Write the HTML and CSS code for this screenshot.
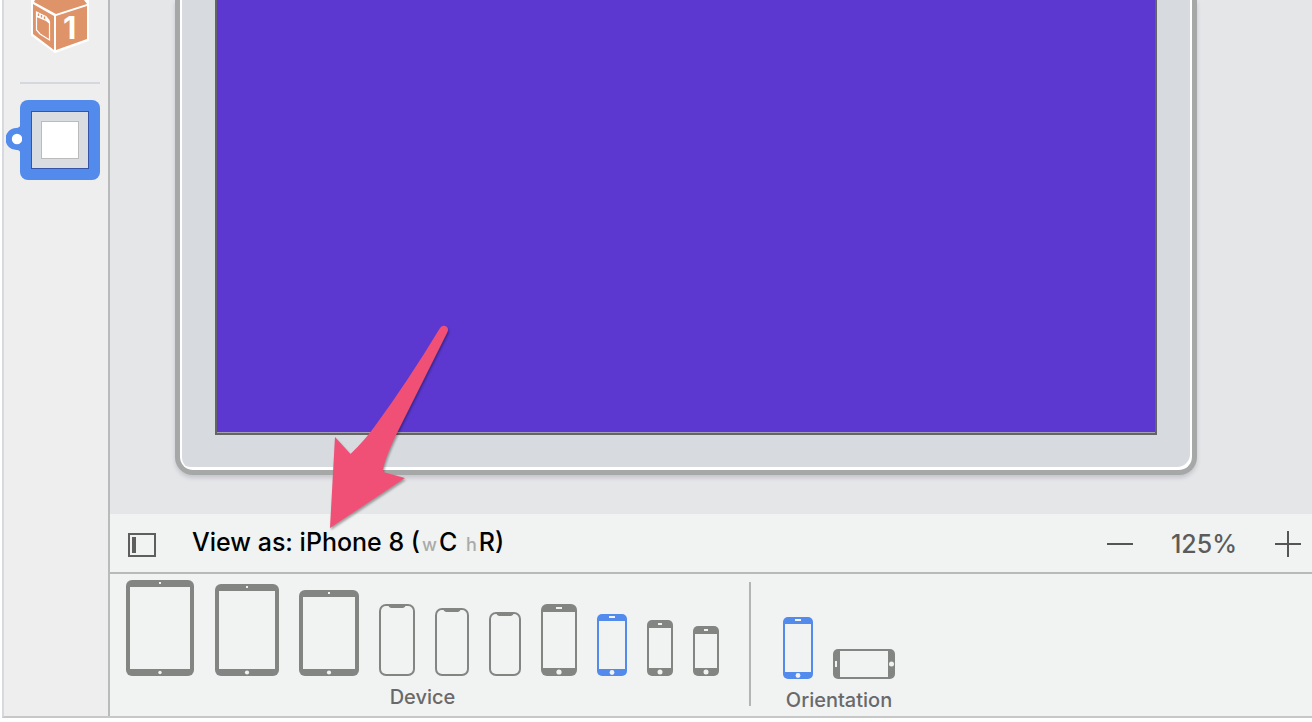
FILE: index.html
```html
<!DOCTYPE html>
<html lang="en">
<head>
<meta charset="utf-8">
<meta name="viewport" content="width=device-width, initial-scale=1">
<title>Interface Builder</title>
<link rel="stylesheet" href="styles.css">
</head>
<body>
<div class="window">
  <nav class="dock" aria-label="Document outline">
    <button class="dock-cube" aria-label="Placeholder object">
      <svg width="60" height="54" viewBox="30 0 60 54">
        <path d="M32 0 60 -12 88 0 88 40 55 52 32 35Z" fill="#fff" stroke="#fff" stroke-width="2" stroke-linejoin="round"/>
        <path d="M35 0 84 0 87 4 56 14 34 2Z" fill="#df9368"/>
        <path d="M33 4 54 16 54 50 33 34Z" fill="#df9368"/>
        <path d="M56 16 87 6 87 39 56 50Z" fill="#df9368"/>
        <path d="M36.500 12 46 17 49.500 22 49.500 40 40 34 36.500 30Z" fill="none" stroke="#fff" stroke-width="1.200"/>
        <path d="M36.500 12 46 16 49.500 20 49.500 24 46 21 36.500 17Z" fill="#fff"/>
        <path d="M38.500 13.500v2.500M41.500 15v2.500M44.500 16.500v2.500" stroke="#df9368" stroke-width="1.400"/>
        <text class="cube-digit" x="63" y="39">1</text>
      </svg>
    </button>
    <hr class="dock-rule">
    <button class="dock-view" aria-label="View">
      <span class="view-frame"><span class="view-sheet"></span></span>
      <svg class="view-link" width="24" height="30" viewBox="0 0 24 30">
        <path d="M15 0Q14 4 10 4A11 11 0 0 0 11 26Q14 26 15 30H24V0Z" fill="#528bec"/>
        <circle cx="11" cy="15" r="5.200" fill="#fff"/>
      </svg>
    </button>
  </nav>
  <main class="editor">
    <section class="canvas" aria-label="Canvas">
      <div class="phone"><div class="screen"></div></div>
    </section>
    <div class="viewbar">
      <button class="outline-toggle" aria-label="Toggle outline">
        <svg width="28" height="24"><rect x="1" y="1" width="26" height="22" fill="none" stroke="#5e5e5e" stroke-width="2"/><rect x="4" y="4" width="4" height="16" fill="#5e5e5e"/></svg>
      </button>
      <button class="view-as">View as: iPhone 8 (<small>w</small>C <small>h</small>R)</button>
      <div class="zoom">
        <button aria-label="Zoom out"><svg width="26" height="26"><path d="M0 13H26" stroke="#555" stroke-width="2"/></svg></button>
        <button class="percent">125%</button>
        <button aria-label="Zoom in"><svg width="26" height="26"><path d="M0 13H26M13 0V26" stroke="#555" stroke-width="2"/></svg></button>
      </div>
    </div>
    <div class="traits">
      <section class="group">
        <div class="icons">
          <button class="wide" aria-label="iPad Pro 12.9"><svg width="68" height="96"><rect width="68" height="96" rx="6"/><path class="hole" d="M4 7H64V89H4ZM33 2h2v2h-2Z"/><circle class="hole" cx="34" cy="92.500" r="1.700"/></svg></button>
          <button aria-label="iPad Pro 10.5"><svg width="64" height="92"><rect width="64" height="92" rx="6"/><path class="hole" d="M4 7H60V85H4ZM31 2h2v2h-2Z"/><circle class="hole" cx="32" cy="88.500" r="2.100"/></svg></button>
          <button aria-label="iPad 9.7"><svg width="60" height="86"><rect width="60" height="86" rx="6"/><path class="hole" d="M4 7H56V79H4ZM29 2h2v2h-2Z"/><circle class="hole" cx="30" cy="82.500" r="2.100"/></svg></button>
          <button aria-label="iPhone XS Max"><svg width="36" height="72"><rect width="36" height="72" rx="7"/><rect class="hole" x="2" y="2" width="32" height="68" rx="5"/><path d="M9 1H27Q26 4 24 4H12Q10 4 9 1Z"/></svg></button>
          <button aria-label="iPhone XR"><svg width="34" height="68"><rect width="34" height="68" rx="7"/><rect class="hole" x="2" y="2" width="30" height="64" rx="5"/><path d="M8 1H26Q25 4 23 4H11Q9 4 8 1Z"/></svg></button>
          <button aria-label="iPhone XS"><svg width="32" height="64"><rect width="32" height="64" rx="7"/><rect class="hole" x="2" y="2" width="28" height="60" rx="5"/><path d="M7 1H25Q24 4 22 4H10Q8 4 7 1Z"/></svg></button>
          <button aria-label="iPhone 8 Plus"><svg width="36" height="72"><rect width="36" height="72" rx="6"/><path class="hole" d="M2 8H34V64H2ZM15 3h6v2h-6Z"/><circle class="hole" cx="18" cy="68" r="2.600"/></svg></button>
          <button class="on" aria-label="iPhone 8" aria-pressed="true"><svg width="30" height="62"><rect width="30" height="62" rx="5"/><path class="hole" d="M2 7H28V55H2ZM12 2h6v2h-6Z"/><circle class="hole" cx="15" cy="58.500" r="2.400"/></svg></button>
          <button aria-label="iPhone SE"><svg width="26" height="56"><rect width="26" height="56" rx="5"/><path class="hole" d="M2 8H24V48H2ZM11 3h4v2h-4Z"/><circle class="hole" cx="13" cy="52" r="2.500"/></svg></button>
          <button aria-label="iPhone 4s"><svg width="26" height="50"><rect width="26" height="50" rx="5"/><path class="hole" d="M2 8H24V42H2ZM11 3h4v2h-4Z"/><circle class="hole" cx="13" cy="46" r="2.500"/></svg></button>
        </div>
        <span class="caption">Device</span>
      </section>
      <section class="group orientation">
        <div class="icons">
          <button class="on" aria-label="Portrait" aria-pressed="true"><svg width="30" height="62"><rect width="30" height="62" rx="5"/><path class="hole" d="M2 7H28V55H2ZM12 2h6v2h-6Z"/><circle class="hole" cx="15" cy="58.500" r="2.400"/></svg></button>
          <button aria-label="Landscape"><svg width="62" height="30"><rect width="62" height="30" rx="5"/><path class="hole" d="M7 2V28H55V2ZM2 12v6h2v-6Z"/><circle class="hole" cx="58.500" cy="15" r="2.500"/></svg></button>
        </div>
        <span class="caption">Orientation</span>
      </section>
    </div>
  </main>
  <svg class="arrow" width="90" height="210" viewBox="322 322 90 210" aria-hidden="true">
    <path d="M330 528 335 437 350.500 454Q365 440 375 426Q408 381 440 328Q443 324 447 327Q449 329 447 333L397 433Q383 462 383 472L405 478Z"/>
  </svg>
</div>
</body>
</html>
```
FILE: styles.css
```css
* { box-sizing: border-box; }
body {
  margin: 0;
  background: #fff;
  font-family: Inter, "Liberation Sans", sans-serif;
}
button {
  padding: 0;
  border: 0;
  background: none;
  color: inherit;
  font: inherit;
}
svg { display: block; overflow: visible; }

.window {
  position: relative;
  display: flex;
  height: calc(100vh - 4px);
  margin-left: 2px;
  border-left: 2px solid #d6d9e0;
  border-bottom: 2px solid #c6c7c6;
}

.dock {
  display: flex;
  flex: none;
  flex-direction: column;
  align-items: center;
  width: 106px;
  padding-left: 8px;
  border-right: 2px solid #b9bbba;
  background: #eee;
}
.dock-cube svg { overflow: hidden; }
.cube-digit { fill: #fff; font-size: 31px; font-weight: 700; }
.dock-rule {
  width: 80px;
  height: 2px;
  margin: 28px 0 16px;
  border: 0;
  background: #d5d9df;
}
.dock-view {
  position: relative;
  display: grid;
  place-items: center;
  width: 80px;
  height: 80px;
  border-radius: 8px;
  background: #528bec;
}
.view-frame {
  display: grid;
  place-items: center;
  width: 58px;
  height: 58px;
  border: 1px solid #3554a8;
  background: #d9dce0;
}
.view-sheet {
  width: 38px;
  height: 38px;
  border: 1px solid #bbb;
  background: #fff;
}
.view-link {
  position: absolute;
  left: -14px;
  top: 24px;
  clip-path: inset(0 8px 0 0);
}

.editor {
  display: flex;
  flex: 1;
  flex-direction: column;
  min-width: 0;
}
.canvas {
  display: flex;
  flex: 1;
  padding: 0 115px 39px 65px;
  background: #e5e6e8;
}
.phone {
  display: flex;
  flex: 1;
  padding: 0 35px 35px;
  border: solid #a6a7a7;
  border-width: 0 5px 5px;
  border-radius: 0 0 18px 18px;
  background: #d7dadf;
  box-shadow: inset 2px 0 #fff, inset -2px -3px #fff, 0 3px 4px #c4c6cc;
}
.screen {
  flex: 1;
  border: solid #646464;
  border-width: 0 2px 2px;
  background: #5c38d0;
  box-shadow: inset 0 -1px #a4a1b0;
}

.viewbar {
  display: flex;
  align-items: center;
  height: 60px;
  padding: 0 11px 0 18px;
  border-bottom: 2px solid #b8bab9;
  background: #f0f3f2;
}
.outline-toggle { margin-top: 4px; }
.view-as {
  margin-left: 36px;
  color: #000;
  font-size: 25px;
  font-weight: 500;
  line-height: 30px;
  white-space: nowrap;
}
.view-as small { margin: 0 2px; color: #aaa; font-size: 18px; }
.zoom {
  display: flex;
  align-items: center;
  gap: 38px;
  margin: 2px 0 0 auto;
  color: #5b5b5b;
}
.percent { font-size: 25px; font-weight: 500; line-height: 30px; }

.traits {
  display: flex;
  align-items: flex-start;
  height: 142px;
  padding: 6px 16px 0;
  background: #f0f3f2;
}
.group { text-align: center; }
.icons {
  display: flex;
  align-items: flex-end;
  gap: 20px;
  height: 96px;
  fill: #838583;
}
.wide { margin-right: 1px; }
.on { fill: #528bec; }
.hole { fill: #f0f3f2; }
.caption {
  display: block;
  margin-top: 9px;
  color: #696969;
  font-size: 20px;
  font-weight: 500;
  line-height: 24px;
}
.orientation {
  height: 124px;
  margin: 2px 0 0 30px;
  padding: 1px 0 0 32px;
  border-left: 2px solid #b3b5b4;
}

.arrow {
  position: absolute;
  left: 318px;
  top: 322px;
  fill: #f05076;
  filter: drop-shadow(1px 2px 1px #0005);
}
```
